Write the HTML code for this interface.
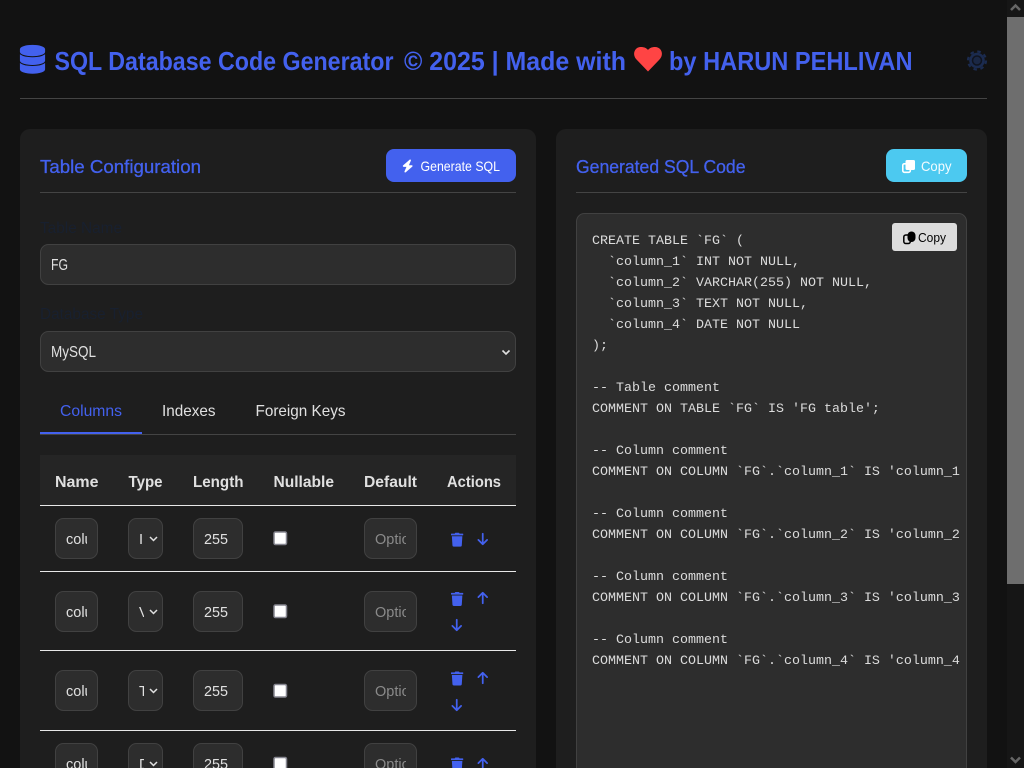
<!DOCTYPE html>
<html lang="en">
<head>
<meta charset="utf-8">
<title>SQL Database Code Generator</title>
<style>
html,body{margin:0;padding:0;width:1024px;height:768px;overflow:hidden;background:#121212}
svg{display:block}
text{font-family:"Liberation Sans",sans-serif;white-space:pre}
.h{font-weight:700;font-size:26px;fill:#4361ee}
.ct{font-size:18px;fill:#4361ee;stroke:#4361ee;stroke-width:.3}
.btn{font-size:14px;fill:#fff}
.lb{font-size:16px;fill:#18202f}
.v{font-size:15.500px;fill:#e0e0e0}
.tab{font-size:16px;fill:#e0e0e0}
.th{font-size:16px;font-weight:700;fill:#e0e0e0}
.c{font-size:14.500px;fill:#e0e0e0}
.o{font-size:14.500px;fill:#8a8a8a}
.code text{font-family:"Liberation Mono",monospace;font-size:13.330px;fill:#dcdcdc}
.in{fill:#2d2d2d;stroke:#414141;stroke-width:1}
.bl{fill:#4361ee}
.cb{fill:#fff;stroke:#85858f;stroke-width:1.500}
</style>
</head>
<body>
<svg width="1024" height="768" viewBox="0 0 1024 768" xmlns="http://www.w3.org/2000/svg">
<defs>
<path id="trash" d="M432 32H312l-9.400-18.700A24 24 0 0 0 281.100 0H166.800a23.720 23.720 0 0 0-21.400 13.300L136 32H16A16 16 0 0 0 0 48v32a16 16 0 0 0 16 16h416a16 16 0 0 0 16-16V48a16 16 0 0 0-16-16zM53.200 467a48 48 0 0 0 47.900 45h245.800a48 48 0 0 0 47.900-45L416 128H32z"/>
<path id="down" d="M169.400 470.600c12.500 12.500 32.800 12.500 45.300 0l160-160c12.500-12.500 12.500-32.800 0-45.300s-32.800-12.500-45.300 0L224 370.800 224 64c0-17.700-14.300-32-32-32s-32 14.300-32 32l0 306.700L54.600 265.400c-12.500-12.500-32.800-12.500-45.300 0s-12.500 32.800 0 45.300l160 160z"/>
<path id="up" d="M214.600 41.400c-12.500-12.500-32.800-12.500-45.300 0l-160 160c-12.500 12.500-12.500 32.800 0 45.300s32.800 12.500 45.300 0L160 141.200V448c0 17.700 14.300 32 32 32s32-14.300 32-32V141.200L329.400 246.600c12.500 12.500 32.800 12.500 45.300 0s12.500-32.800 0-45.300l-160-160z"/>
<clipPath id="cc"><rect x="576" y="213" width="384" height="555"/></clipPath>
<clipPath id="n"><rect x="66" y="500" width="21" height="290"/></clipPath>
<clipPath id="t"><rect x="139" y="500" width="5" height="290"/></clipPath>
<clipPath id="d"><rect x="375" y="500" width="31" height="290"/></clipPath>
</defs>

<rect width="1024" height="768" fill="#121212"/>

<!-- Scrollbar -->
<rect x="1007" y="0" width="17" height="768" fill="#161616"/>
<rect x="1007" y="17" width="17" height="567" fill="#6e6e6e"/>
<path d="M1011 10l4.500-4.500 4.500 4.500" fill="none" stroke="#666" stroke-width="2.500"/>
<path d="M1011 757.500l4.500 4.500 4.500-4.500" fill="none" stroke="#666" stroke-width="2.500"/>

<!-- Header -->
<path class="bl" stroke="#4361ee" stroke-width="14" transform="translate(20.300 45.300) scale(.0545 .0548)" d="M448 73.143v45.714C448 159.143 347.667 192 224 192S0 159.143 0 118.857V73.143C0 32.857 100.333 0 224 0s224 32.857 224 73.143zM448 176v102.857C448 319.143 347.667 352 224 352S0 319.143 0 278.857V176c48.125 33.143 136.208 48.572 224 48.572S399.874 209.143 448 176zm0 160v102.857C448 479.143 347.667 512 224 512S0 479.143 0 438.857V336c48.125 33.143 136.208 48.572 224 48.572S399.874 369.143 448 336z"/>
<text class="h" x="54.500" y="70" textLength="339" lengthAdjust="spacingAndGlyphs">SQL Database Code Generator</text>
<text class="h" x="404" y="70" textLength="222" lengthAdjust="spacingAndGlyphs">© 2025 | Made with</text>
<path fill="#ff4444" d="M648 71.500L636.500 59.500C632 55 634 47 641 47C644 47 646.500 48 648 50C649.500 48 652 47 655 47C662 47 664 55 659.500 59.500Z"/>
<text class="h" x="669" y="70" textLength="243.500" lengthAdjust="spacingAndGlyphs">by HARUN PEHLIVAN</text>
<g>
<circle cx="977" cy="60.500" r="7.800" fill="#1b2b4f"/>
<circle cx="977" cy="60.500" r="9" fill="none" stroke="#1b2b4f" stroke-width="2.200" stroke-dasharray="3.500 3.569"/>
<circle cx="977" cy="60.500" r="4.500" fill="#1a2744" stroke="#10141f" stroke-width="1.500"/>
</g>
<rect x="20" y="98" width="967" height="1" fill="#444"/>

<!-- Cards -->
<rect x="20" y="129" width="516" height="680" rx="10" fill="#1e1e1e"/>
<rect x="556" y="129" width="431" height="680" rx="10" fill="#1e1e1e"/>

<!-- Left card header -->
<text class="ct" x="40" y="173" textLength="161" lengthAdjust="spacingAndGlyphs">Table Configuration</text>
<rect x="386" y="149" width="130" height="33" rx="8" fill="#4361ee"/>
<path fill="#fff" transform="translate(402 159.500) scale(.0254)" d="M349.400 44.600c5.900-13.700 1.500-29.700-10.600-38.500s-28.600-8-39.900 1.800l-256 224c-10 8.800-13.600 22.900-8.900 35.300S50.700 288 64 288H175.500L98.600 467.400c-5.900 13.700-1.500 29.700 10.600 38.500s28.600 8 39.900-1.800l256-224c10-8.800 13.600-22.900 8.900-35.300s-16.600-20.700-30-20.700H272.500L349.400 44.600z"/>
<text class="btn" x="420.500" y="171" textLength="79.500" lengthAdjust="spacingAndGlyphs">Generate SQL</text>
<rect x="40" y="192" width="476" height="1" fill="#444"/>

<!-- Form -->
<text class="lb" x="40" y="233" textLength="82" lengthAdjust="spacingAndGlyphs">Table Name</text>
<rect class="in" x="40.500" y="244.500" width="475" height="40" rx="8"/>
<text class="v" x="51" y="270" textLength="17" lengthAdjust="spacingAndGlyphs">FG</text>
<text class="lb" x="40" y="319" textLength="103" lengthAdjust="spacingAndGlyphs">Database Type</text>
<rect class="in" x="40.500" y="331.500" width="475" height="40" rx="8"/>
<text class="v" x="51" y="357" textLength="45" lengthAdjust="spacingAndGlyphs">MySQL</text>
<path d="M502.500 350.500l3.500 3.500 3.500-3.500" fill="none" stroke="#e0e0e0" stroke-width="1.600"/>

<!-- Tabs -->
<text class="tab" x="60" y="416" textLength="62" lengthAdjust="spacingAndGlyphs" style="fill:#4361ee">Columns</text>
<text class="tab" x="162" y="416" textLength="53.500" lengthAdjust="spacingAndGlyphs">Indexes</text>
<text class="tab" x="255.500" y="416" textLength="90" lengthAdjust="spacingAndGlyphs">Foreign Keys</text>
<rect x="40" y="434" width="476" height="1" fill="#444"/>
<rect x="40" y="432" width="102" height="2" fill="#4361ee"/>

<!-- Table head -->
<rect x="40" y="455" width="476" height="50" fill="#252525"/>
<text class="th" x="55" y="487" textLength="43.500" lengthAdjust="spacingAndGlyphs">Name</text>
<text class="th" x="128.500" y="487" textLength="34" lengthAdjust="spacingAndGlyphs">Type</text>
<text class="th" x="193" y="487" textLength="50.500" lengthAdjust="spacingAndGlyphs">Length</text>
<text class="th" x="273.500" y="487" textLength="60.500" lengthAdjust="spacingAndGlyphs">Nullable</text>
<text class="th" x="364" y="487" textLength="53" lengthAdjust="spacingAndGlyphs">Default</text>
<text class="th" x="447" y="487" textLength="54" lengthAdjust="spacingAndGlyphs">Actions</text>
<rect x="40" y="505" width="476" height="1" fill="#e8e8e8"/>
<rect x="40" y="571" width="476" height="1" fill="#e8e8e8"/>
<rect x="40" y="650" width="476" height="1" fill="#e8e8e8"/>
<rect x="40" y="730" width="476" height="1" fill="#e8e8e8"/>

<!-- Row 1 -->
<g>
<rect class="in" x="55.500" y="518.500" width="42" height="40" rx="8"/>
<rect class="in" x="128.500" y="518.500" width="34" height="40" rx="8"/>
<rect class="in" x="193.500" y="518.500" width="49" height="40" rx="8"/>
<rect class="in" x="364.500" y="518.500" width="52" height="40" rx="8"/>
<rect class="cb" x="274" y="532" width="12.500" height="12.500" rx="1.500"/>
<text class="c" x="66" y="544" clip-path="url(#n)">column_1</text>
<text class="c" x="139" y="544" clip-path="url(#t)">INT</text>
<path d="M150 537l3.500 3.500 3.500-3.500" fill="none" stroke="#e0e0e0" stroke-width="1.500"/>
<text class="c" x="204" y="544" textLength="24" lengthAdjust="spacingAndGlyphs">255</text>
<text class="o" x="375" y="544" clip-path="url(#d)">Optional</text>
<use href="#trash" class="bl" transform="translate(451 532.700) scale(.0273)"/>
<use href="#down" class="bl" transform="translate(477.500 532) scale(.0273)"/>
</g>

<!-- Row 2 -->
<g>
<rect class="in" x="55.500" y="591.500" width="42" height="40" rx="8"/>
<rect class="in" x="128.500" y="591.500" width="34" height="40" rx="8"/>
<rect class="in" x="193.500" y="591.500" width="49" height="40" rx="8"/>
<rect class="in" x="364.500" y="591.500" width="52" height="40" rx="8"/>
<rect class="cb" x="274" y="605" width="12.500" height="12.500" rx="1.500"/>
<text class="c" x="66" y="617" clip-path="url(#n)">column_2</text>
<text class="c" x="139" y="617" clip-path="url(#t)">VARCHAR</text>
<path d="M150 610l3.500 3.500 3.500-3.500" fill="none" stroke="#e0e0e0" stroke-width="1.500"/>
<text class="c" x="204" y="617" textLength="24" lengthAdjust="spacingAndGlyphs">255</text>
<text class="o" x="375" y="617" clip-path="url(#d)">Optional</text>
<use href="#trash" class="bl" transform="translate(451 592) scale(.0273)"/>
<use href="#up" class="bl" transform="translate(477.500 591) scale(.0273)"/>
<use href="#down" class="bl" transform="translate(451.500 618) scale(.0273)"/>
</g>

<!-- Row 3 -->
<g>
<rect class="in" x="55.500" y="670.500" width="42" height="40" rx="8"/>
<rect class="in" x="128.500" y="670.500" width="34" height="40" rx="8"/>
<rect class="in" x="193.500" y="670.500" width="49" height="40" rx="8"/>
<rect class="in" x="364.500" y="670.500" width="52" height="40" rx="8"/>
<rect class="cb" x="274" y="684.500" width="12.500" height="12.500" rx="1.500"/>
<text class="c" x="66" y="696" clip-path="url(#n)">column_3</text>
<text class="c" x="139" y="696" clip-path="url(#t)">TEXT</text>
<path d="M150 689l3.500 3.500 3.500-3.500" fill="none" stroke="#e0e0e0" stroke-width="1.500"/>
<text class="c" x="204" y="696" textLength="24" lengthAdjust="spacingAndGlyphs">255</text>
<text class="o" x="375" y="696" clip-path="url(#d)">Optional</text>
<use href="#trash" class="bl" transform="translate(451 671.500) scale(.0273)"/>
<use href="#up" class="bl" transform="translate(477.500 671) scale(.0273)"/>
<use href="#down" class="bl" transform="translate(451.500 698) scale(.0273)"/>
</g>

<!-- Row 4 -->
<g>
<rect class="in" x="55.500" y="743.500" width="42" height="40" rx="8"/>
<rect class="in" x="128.500" y="743.500" width="34" height="40" rx="8"/>
<rect class="in" x="193.500" y="743.500" width="49" height="40" rx="8"/>
<rect class="in" x="364.500" y="743.500" width="52" height="40" rx="8"/>
<rect class="cb" x="274" y="757.500" width="12.500" height="12.500" rx="1.500"/>
<text class="c" x="66" y="769" clip-path="url(#n)">column_4</text>
<text class="c" x="139" y="769" clip-path="url(#t)">DATE</text>
<path d="M150 762l3.500 3.500 3.500-3.500" fill="none" stroke="#e0e0e0" stroke-width="1.500"/>
<text class="c" x="204" y="769" textLength="24" lengthAdjust="spacingAndGlyphs">255</text>
<text class="o" x="375" y="769" clip-path="url(#d)">Optional</text>
<use href="#trash" class="bl" transform="translate(451 757.500) scale(.0273)"/>
<use href="#up" class="bl" transform="translate(477.500 757) scale(.0273)"/>
</g>

<!-- Right card -->
<text class="ct" x="576" y="173" textLength="169.500" lengthAdjust="spacingAndGlyphs">Generated SQL Code</text>
<rect x="886" y="149" width="81" height="33" rx="8" fill="#4cc9f0"/>
<rect x="902.800" y="163.800" width="7.500" height="8.500" rx="1.500" fill="none" stroke="#fff" stroke-width="1.600"/>
<rect x="905.500" y="160" width="9.500" height="10" rx="1.500" fill="#fff"/>
<text class="btn" x="921" y="171" textLength="30.500" lengthAdjust="spacingAndGlyphs" style="fill:#f2fbfe">Copy</text>
<rect x="576" y="192" width="391" height="1" fill="#444"/>

<rect class="in" x="576.500" y="213.500" width="390" height="600" rx="8"/>
<g class="code" clip-path="url(#cc)">
<text x="592" y="244">CREATE TABLE `FG` (</text>
<text x="608" y="265">`column_1` INT NOT NULL,</text>
<text x="608" y="286">`column_2` VARCHAR(255) NOT NULL,</text>
<text x="608" y="307">`column_3` TEXT NOT NULL,</text>
<text x="608" y="328">`column_4` DATE NOT NULL</text>
<text x="592" y="349">);</text>
<text x="592" y="391">-- Table comment</text>
<text x="592" y="412">COMMENT ON TABLE `FG` IS 'FG table';</text>
<text x="592" y="454">-- Column comment</text>
<text x="592" y="475">COMMENT ON COLUMN `FG`.`column_1` IS 'column_1 comment';</text>
<text x="592" y="517">-- Column comment</text>
<text x="592" y="538">COMMENT ON COLUMN `FG`.`column_2` IS 'column_2 comment';</text>
<text x="592" y="580">-- Column comment</text>
<text x="592" y="601">COMMENT ON COLUMN `FG`.`column_3` IS 'column_3 comment';</text>
<text x="592" y="643">-- Column comment</text>
<text x="592" y="664">COMMENT ON COLUMN `FG`.`column_4` IS 'column_4 comment';</text>
</g>

<!-- Inner copy button -->
<rect x="892" y="223" width="65" height="28" rx="3" fill="#dcdcdc"/>
<rect x="903.800" y="235" width="6.500" height="8.500" rx="2" fill="none" stroke="#000" stroke-width="1.500"/>
<rect x="907.500" y="231.500" width="8" height="10.500" rx="4" fill="#000"/>
<text x="918" y="242" font-size="13.300" fill="#000" textLength="28" lengthAdjust="spacingAndGlyphs">Copy</text>
</svg>
</body>
</html>
